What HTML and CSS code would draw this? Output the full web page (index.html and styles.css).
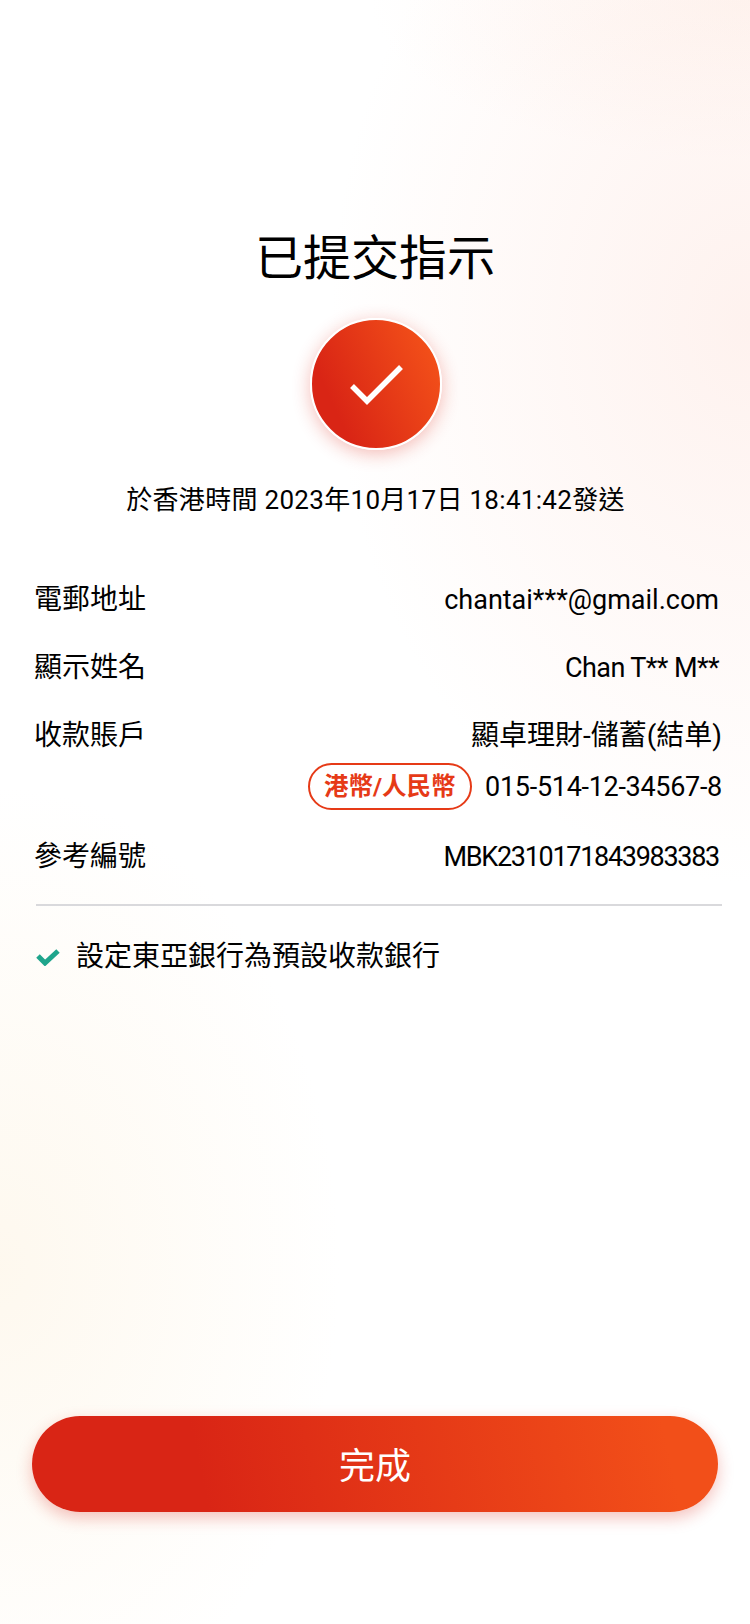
FILE: index.html
```html
<!DOCTYPE html>
<html lang="zh-Hant">
<head>
  <meta charset="UTF-8">
  <meta name="viewport" content="width=device-width, initial-scale=1.0">
  <title>已提交指示</title>
  <link rel="stylesheet" href="styles.css">
</head>
<body>
  <main class="page">
    <h1 class="title">已提交指示</h1>

    <div class="status-circle">
      <svg class="status-check" width="56" height="44" viewBox="0 0 56 44">
        <path d="M4 24 L19 39 L53 5" fill="none" stroke="#fff" stroke-width="5.5"/>
      </svg>
    </div>

    <p class="sent-time">於香港時間 2023年10月17日 18:41:42發送</p>

    <div class="details">
      <div class="row">
        <span class="label">電郵地址</span>
        <span class="value">chantai***@gmail.com</span>
      </div>
      <div class="row">
        <span class="label">顯示姓名</span>
        <span class="value value-name">Chan T** M**</span>
      </div>
      <div class="row row-account">
        <span class="label">收款賬戶</span>
        <div class="account">
          <span class="value account-name">顯卓理財-儲蓄(結单)</span>
          <div class="account-line">
            <span class="badge">港幣/人民幣</span>
            <span class="value value-account">015-514-12-34567-8</span>
          </div>
        </div>
      </div>
      <div class="row">
        <span class="label">參考編號</span>
        <span class="value value-ref">MBK2310171843983383</span>
      </div>
    </div>

    <div class="default-bank">
      <svg class="tick" width="24" height="18" viewBox="0 0 24 18">
        <path d="M2 8 L9 15 L22 3" fill="none" stroke="#1fa58c" stroke-width="5"/>
      </svg>
      <span>設定東亞銀行為預設收款銀行</span>
    </div>

    <button class="done-button">完成</button>
  </main>
</body>
</html>
```

FILE: styles.css
```css
* {
  margin: 0;
  padding: 0;
  box-sizing: border-box;
}

body {
  width: 750px;
  height: 1624px;
  overflow: hidden;
  font-family: 'Roboto', 'Noto Sans CJK TC', sans-serif;
  color: #000;
  background-color: #fff;
  background-image:
    radial-gradient(ellipse 420px 560px at 100% 20%, rgba(253, 226, 218, 0.45), rgba(253, 226, 218, 0)),
    radial-gradient(ellipse 380px 160px at 100% 0%, rgba(253, 232, 222, 0.4), rgba(253, 232, 222, 0)),
    radial-gradient(ellipse 340px 480px at 0% 78%, rgba(253, 243, 225, 0.55), rgba(253, 243, 225, 0));
}

.page {
  height: 100%;
  display: flex;
  flex-direction: column;
  align-items: center;
  padding-top: 224px;
}

.title {
  font-size: 48px;
  font-weight: 400;
  line-height: 70px;
}

.status-circle {
  width: 132px;
  height: 132px;
  margin-top: 24px;
  margin-left: 2px;
  border: 2px solid #fff;
  border-radius: 50%;
  display: flex;
  align-items: center;
  justify-content: center;
  background: linear-gradient(65deg, #d92515 22%, #f24f19 88%);
  box-shadow: 0 4px 18px rgba(217, 37, 21, 0.3);
}

.sent-time {
  margin-top: 31px;
  margin-left: 1px;
  font-size: 26px;
  letter-spacing: 0.3px;
  line-height: 38px;
}

.details {
  width: 100%;
  margin-top: 61px;
  padding: 0 31px 0 34px;
  display: flex;
  flex-direction: column;
  gap: 28px;
}

.row {
  display: flex;
  justify-content: space-between;
  align-items: flex-start;
  font-size: 27px;
  line-height: 40px;
}

.row-account {
  margin-bottom: -1px;
}

.label {
  font-size: 28px;
}

.value {
  white-space: nowrap;
}

.value-name {
  letter-spacing: -0.6px;
}

.value-account {
  letter-spacing: -0.3px;
}

.value-ref {
  letter-spacing: -1.3px;
}

.account {
  margin-right: -3px;
  display: flex;
  flex-direction: column;
  align-items: flex-end;
}

.account-name {
  font-size: 28px;
}

.account-line {
  margin-top: 7px;
  display: flex;
  align-items: center;
  gap: 13px;
}

.badge {
  height: 47px;
  padding: 0 14.5px;
  border: 2px solid #e63a17;
  border-radius: 24px;
  font-size: 24.5px;
  font-weight: 700;
  line-height: 43px;
  color: #e63a17;
}

.default-bank {
  width: 686px;
  margin-top: 27px;
  margin-left: 8px;
  padding-top: 31px;
  border-top: 2px solid #d9d9dc;
  display: flex;
  align-items: center;
  gap: 16px;
  font-size: 28px;
  line-height: 40px;
}

.done-button {
  width: 686px;
  height: 96px;
  margin-top: auto;
  margin-bottom: 112px;
  padding-bottom: 3px;
  border: none;
  border-radius: 48px;
  font-family: inherit;
  font-size: 36px;
  color: #fff;
  background: linear-gradient(78deg, #d92515 25%, #f24f19 92%);
  box-shadow: 0 6px 16px rgba(217, 37, 21, 0.28);
}
```
